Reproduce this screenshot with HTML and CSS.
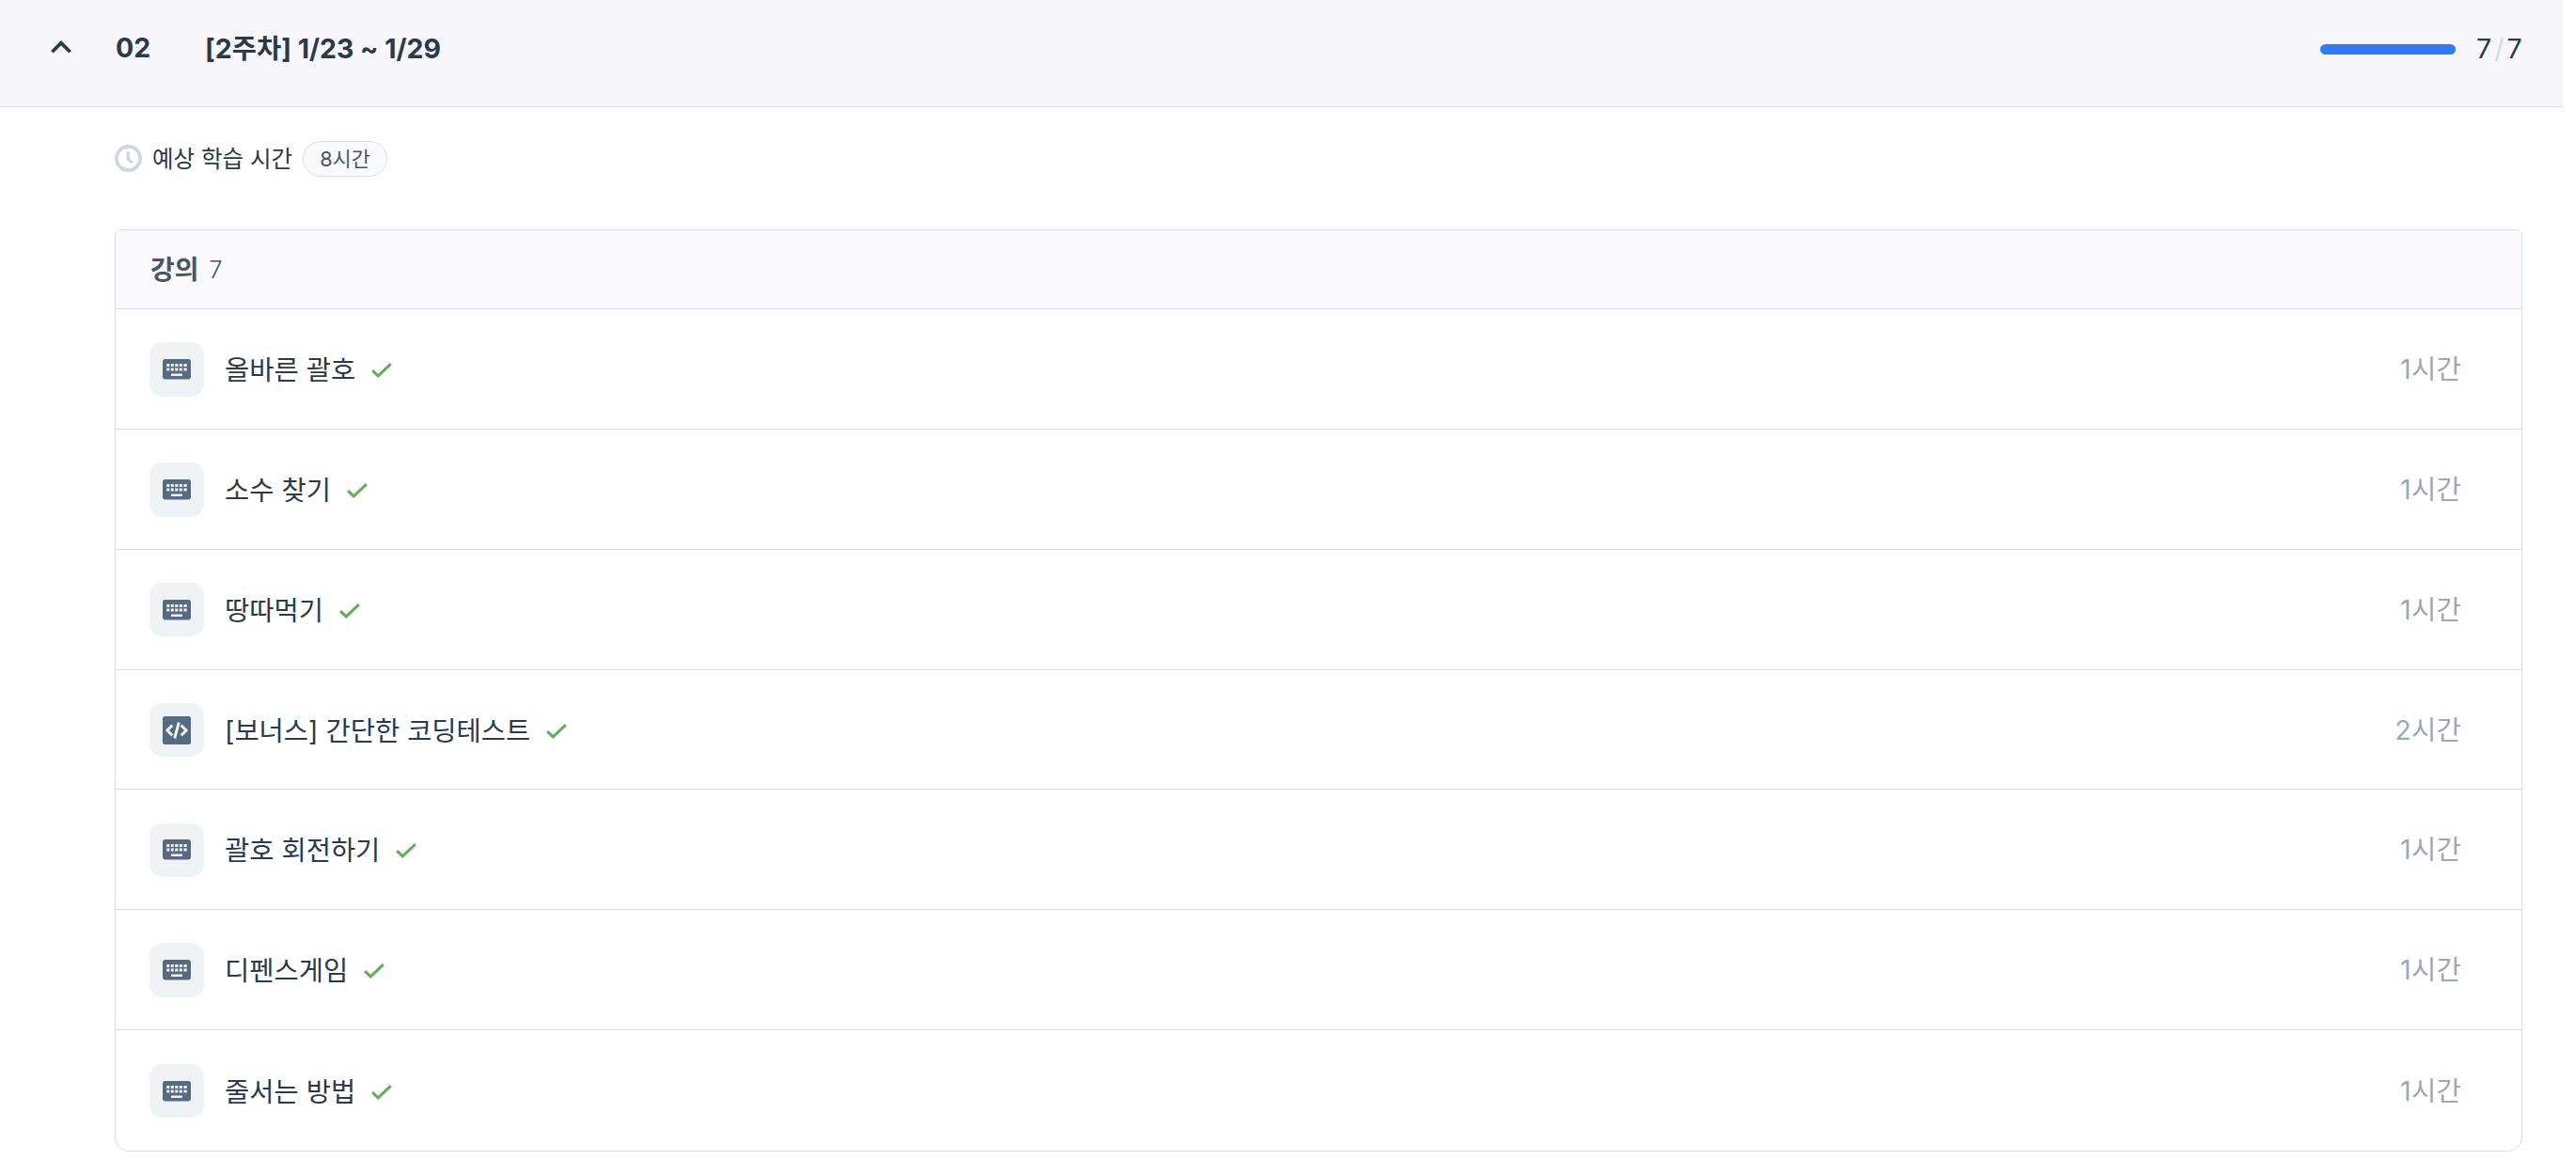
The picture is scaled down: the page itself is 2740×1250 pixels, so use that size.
FILE: index.html
```
<!DOCTYPE html>
<html lang="ko">
<head>
<meta charset="utf-8">
<title>[2주차] 1/23 ~ 1/29</title>
<link rel="stylesheet" href="styles.css">
</head>
<body>
<svg class="sprite" aria-hidden="true">
  <symbol id="keyboard" viewBox="0 0 30 22"><path fill-rule="evenodd" d="M3 0h24a3 3 0 0 1 3 3v15.500a3 3 0 0 1-3 3H3a3 3 0 0 1-3-3V3a3 3 0 0 1 3-3zM4.300 5v3h3V5zM8.800 5v3h3V5zM13.300 5v3h3V5zM17.800 5v3h3V5zM22.500 5v3h3.200V5zM4.300 9.400v3h3v-3zM8.800 9.400v3h3v-3zM13.300 9.400v3h3v-3zM17.800 9.400v3h3v-3zM22.500 9.400v3h3.200v-3zM9 15.400v2.600h12v-2.600z"/></symbol>
  <symbol id="code" viewBox="0 0 30 30"><rect width="30" height="30" rx="2.500"/><path d="M10.300 9.600 4.900 15l5.400 5.400M19.700 9.600l5.400 5.400-5.400 5.400M17.300 6.500l-4.600 17" fill="none" stroke="#eff3f6" stroke-width="2.900"/></symbol>
  <symbol id="check" viewBox="0 0 22 16"><path d="M1.200 8.200 7.200 13.900 20.800 1.200" fill="none" stroke="currentColor" stroke-width="3.100"/></symbol>
</svg>
<header class="week">
  <svg class="chevron" viewBox="0 0 22 14"><path d="M1.400 12.200 11 2.600l9.600 9.600" fill="none" stroke="currentColor" stroke-width="3.700"/></svg>
  <span class="number">02</span>
  <h2 class="title">[2주차] 1/23 ~ 1/29</h2>
  <span class="bar"></span>
  <span class="count">7<i>/</i>7</span>
</header>
<main class="content">
  <div class="estimate">
    <svg class="clock" viewBox="0 0 30 30"><circle cx="15" cy="15" r="13" fill="none" stroke="currentColor" stroke-width="3.800"/><path d="M14.700 7.500v8l4.900 4.300" fill="none" stroke="currentColor" stroke-width="3.400"/></svg>
    <span class="label">예상 학습 시간</span>
    <span class="pill">8시간</span>
  </div>
  <section class="card">
    <div class="card-head"><b>강의</b><span>7</span></div>
    <ul class="list">
      <li><span class="icon"><svg class="kb"><use href="#keyboard"/></svg></span><span class="name">올바른 괄호</span><svg class="check"><use href="#check"/></svg><span class="time">1시간</span></li>
      <li><span class="icon"><svg class="kb"><use href="#keyboard"/></svg></span><span class="name">소수 찾기</span><svg class="check"><use href="#check"/></svg><span class="time">1시간</span></li>
      <li><span class="icon"><svg class="kb"><use href="#keyboard"/></svg></span><span class="name">땅따먹기</span><svg class="check"><use href="#check"/></svg><span class="time">1시간</span></li>
      <li><span class="icon"><svg class="cd"><use href="#code"/></svg></span><span class="name">[보너스] 간단한 코딩테스트</span><svg class="check"><use href="#check"/></svg><span class="time">2시간</span></li>
      <li><span class="icon"><svg class="kb"><use href="#keyboard"/></svg></span><span class="name">괄호 회전하기</span><svg class="check"><use href="#check"/></svg><span class="time">1시간</span></li>
      <li><span class="icon"><svg class="kb"><use href="#keyboard"/></svg></span><span class="name">디펜스게임</span><svg class="check"><use href="#check"/></svg><span class="time">1시간</span></li>
      <li><span class="icon"><svg class="kb"><use href="#keyboard"/></svg></span><span class="name">줄서는 방법</span><svg class="check"><use href="#check"/></svg><span class="time">1시간</span></li>
    </ul>
  </section>
</main>
</body>
</html>
```
FILE: styles.css
```
* { box-sizing: border-box; margin: 0; padding: 0; }
body { background: #fff; color: #2b3a4a; font: 28.500px/40px Inter, "Noto Sans CJK KR", sans-serif; }
svg { display: block; flex: none; }
.sprite { display: none; }

.week { display: flex; align-items: center; width: 2726px; height: 114px; padding: 0 43px 11px 54px; background: #f6f6fb; border-bottom: 1px solid #dbe1e8; }
.chevron { width: 22px; height: 14px; margin-top: -3px; }
.number { width: 95px; margin-left: 47px; font-weight: 650; }
.title { margin-top: 1px; font-size: 28.500px; font-weight: 650; letter-spacing: 0; }
.bar { width: 144px; height: 11px; margin: 2px 22px 0 auto; border-radius: 6px; background: #2f7bf8; }
.count { width: 49px; margin-top: 1px; font-weight: 380; white-space: nowrap; }
.count i { font-style: normal; color: #d1dae2; margin: 0 3px; }

.content { padding: 36px 57px 0 122px; }
.estimate { display: flex; align-items: center; height: 38px; font-size: 24.500px; }
.clock { width: 29px; height: 29px; margin: -1px 11px 0 0; color: #ced7df; }
.pill { width: 90px; height: 38px; margin-left: 11px; border: 1px solid #d7e0e8; border-radius: 19px; background: #fafafd; color: #46566a; font-size: 21.700px; line-height: 37px; text-align: center; }

.card { margin-top: 56px; border: 1px solid #d7e0e9; border-radius: 7px 7px 15px 15px; overflow: hidden; }
.card-head { display: flex; align-items: center; height: 84px; padding-left: 37px; background: #fafafd; border-bottom: 1px solid #d7e0e9; color: #46566a; }
.card-head b { font-size: 28px; }
.card-head span { margin: 1px 0 0 11px; font-size: 25px; font-weight: 350; }
.list { list-style: none; }
.list li { display: flex; align-items: center; height: 127.860px; padding: 0 64px 0 36px; border-bottom: 1px solid #d7e0e9; }
.list li:last-child { border-bottom: 0; }
.icon { display: grid; place-items: center; width: 58px; height: 57.500px; margin: 1px 22px 0 0; border-radius: 14px; background: #eff3f6; color: #566a80; fill: currentColor; }
.kb { width: 30px; height: 22px; }
.cd { width: 30px; height: 30px; }
.name { margin-top: 3px; font-size: 28.500px; }
.check { width: 22px; height: 16px; margin: 3px 0 0 17px; color: #64ad5a; }
.time { margin: 1px 0 0 auto; color: #9ba8b8; font-weight: 400; letter-spacing: 0.300px; }
```
